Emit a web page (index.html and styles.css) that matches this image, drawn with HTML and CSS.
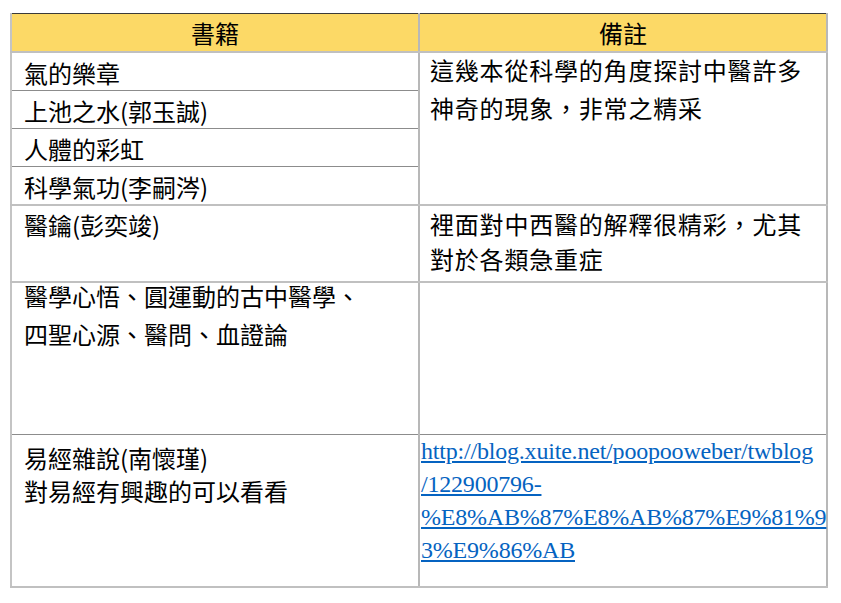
FILE: index.html
```html
<!DOCTYPE html>
<html lang="zh-Hant">
<head>
<meta charset="utf-8">
<title>書籍</title>
<link rel="stylesheet" href="styles.css">
</head>
<body>
<table class="books">
  <colgroup><col class="col-half"><col class="col-half"></colgroup>
  <thead>
    <tr class="head-row">
      <th>書籍</th>
      <th>備註</th>
    </tr>
  </thead>
  <tbody>
    <tr class="short-row thin">
      <td>氣的樂章</td>
      <td class="note first-note" rowspan="4"><div class="lift">這幾本從科學的角度探討中醫許多<br>神奇的現象，非常之精采</div></td>
    </tr>
    <tr class="short-row thin">
      <td>上池之水(郭玉誠)</td>
    </tr>
    <tr class="short-row thin">
      <td>人體的彩虹</td>
    </tr>
    <tr class="short-row">
      <td>科學氣功(李嗣涔)</td>
    </tr>
    <tr class="mid-row">
      <td class="top-tight">醫鑰(彭奕竣)</td>
      <td class="note top-tight tight-lines">裡面對中西醫的解釋很精彩，尤其<br>對於各類急重症</td>
    </tr>
    <tr class="tall-row dark">
      <td class="top-tight wide-lines"><div class="lift-more">醫學心悟、圓運動的古中醫學、<br>四聖心源、醫問、血證論</div></td>
      <td></td>
    </tr>
    <tr class="last-row">
      <td class="top-loose">易經雜說(南懷瑾)<br>對易經有興趣的可以看看</td>
      <td class="link-cell"><a href="#" class="url">http://blog.xuite.net/poopooweber/twblog<br>/122900796-<br>%E8%AB%87%E8%AB%87%E9%81%9<br>3%E9%86%AB</a></td>
    </tr>
  </tbody>
</table>
</body>
</html>
```

FILE: styles.css
```css
html, body {
  margin: 0;
  padding: 0;
  background: #ffffff;
}

body {
  padding: 13px 0 0 10px;
  font-family: "Noto Sans CJK TC", "Noto Sans", sans-serif;
  color: #000000;
}

.books {
  width: 818px;
  table-layout: fixed;
  border-collapse: collapse;
  border-top: 1px solid #3a3a3a;
  border-left: 2px solid #c4c4c4;
  border-right: 2px solid #7a7a7a;
  border-bottom: 2px solid #c4c4c4;
  font-size: 24px;
}

.col-half {
  width: 50%;
}

.head-row th {
  background: #fcd966;
  font-weight: 400;
  height: 37px;
  padding: 0;
  line-height: 37px;
  text-align: center;
  border-bottom: 2px solid #c0c0c0;
  border-right: 2px solid #b8b8b8;
}

td {
  vertical-align: top;
  padding: 2px 12px 0 12px;
  line-height: 37px;
  border-right: 2px solid #b8b8b8;
  border-bottom: 2px solid #c0c0c0;
}

.short-row td {
  line-height: 35px;
}

.thin td {
  border-bottom: 1px solid #8c8c8c;
}

.thin td.note {
  border-bottom: 2px solid #c0c0c0;
}

.mid-row td {
  height: 75px;
}

.tall-row td {
  height: 149px;
}

.last-row td {
  height: 145px;
}

.dark td {
  border-bottom: 1px solid #8c8c8c;
}

.note {
  letter-spacing: 0.8px;
  padding-left: 10px;
}

.short-row td.first-note {
  padding-top: 0;
  line-height: 38px;
}

.lift {
  margin-top: -2px;
}

.top-tight {
  padding-top: 0;
}

.tight-lines {
  line-height: 35px;
}

.wide-lines {
  line-height: 38px;
}

.lift-more {
  margin-top: -6px;
}

.top-loose {
  padding-top: 6px;
  line-height: 33px;
}

.link-cell {
  padding: 0 0 0 1px;
  font-family: "Liberation Serif", serif;
  line-height: 33px;
}

.url {
  font-family: "Liberation Serif", serif;
  font-size: 24px;
  line-height: 33px;
  color: #0563c1;
  text-decoration: underline;
  white-space: nowrap;
  letter-spacing: -0.2px;
}
```
